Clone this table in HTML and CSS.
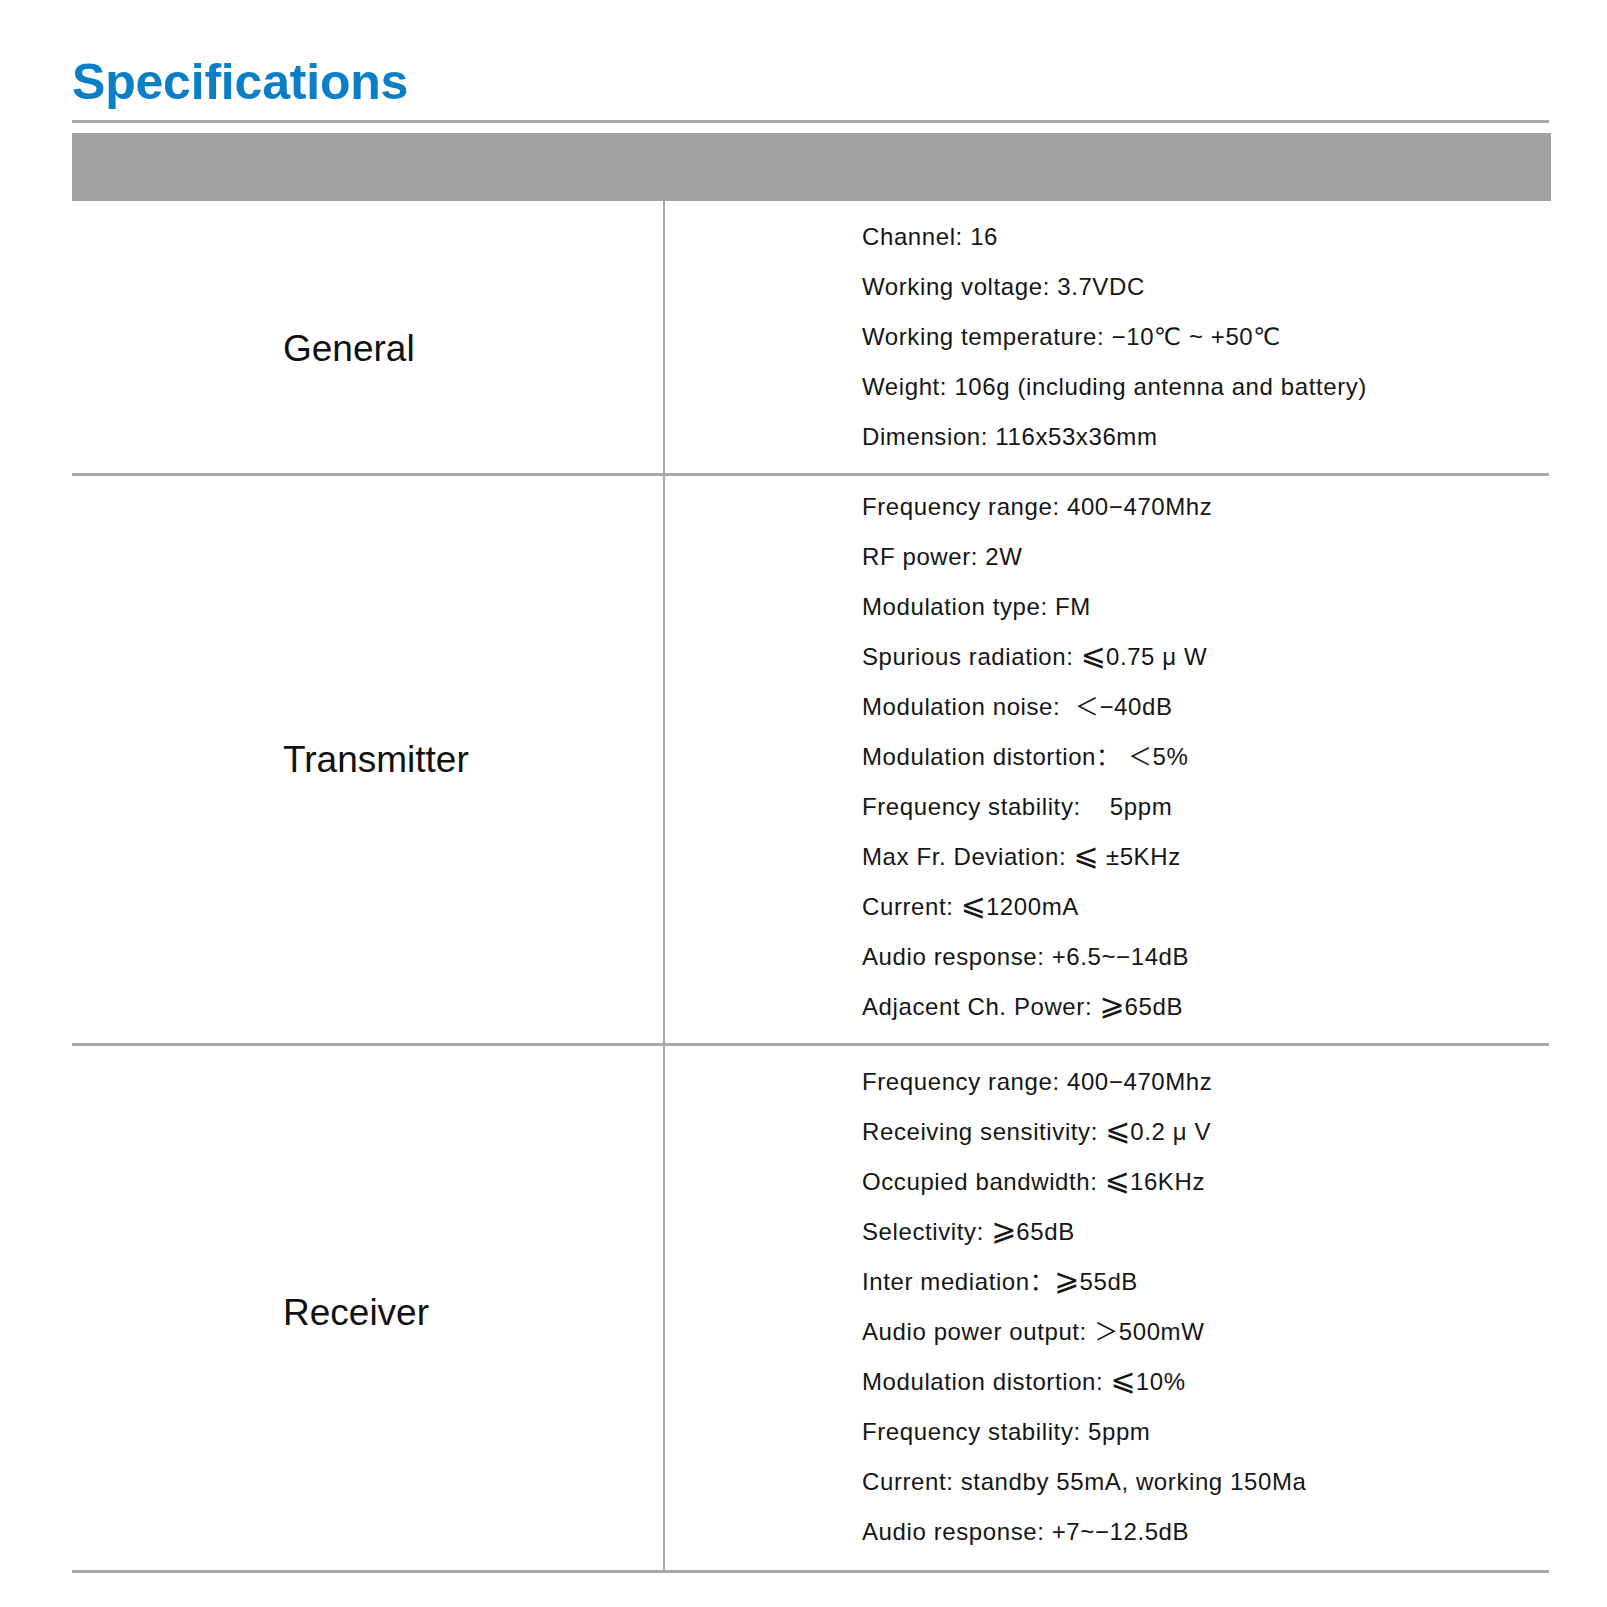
FILE: index.html
```html
<!DOCTYPE html>
<html lang="en">
<head>
<meta charset="utf-8">
<title>Specifications</title>
<link rel="stylesheet" href="styles.css">
</head>
<body>
<main class="page">
  <h1 class="title">Specifications</h1>
  <div class="title-rule"></div>
  <div class="head-bar"></div>
  <section class="spec-table">
    <div class="spec-row spec-row--general">
      <div class="spec-label"><span>General</span></div>
      <ul class="spec-list">
        <li>Channel: 16</li>
        <li>Working voltage: 3.7VDC</li>
        <li>Working temperature: −10℃ ~ +50℃</li>
        <li>Weight: 106g (including antenna and battery)</li>
        <li>Dimension: 116x53x36mm</li>
      </ul>
    </div>
    <div class="spec-row spec-row--tx">
      <div class="spec-label"><span>Transmitter</span></div>
      <ul class="spec-list">
        <li>Frequency range: 400−470Mhz</li>
        <li>RF power: 2W</li>
        <li>Modulation type: FM</li>
        <li>Spurious radiation: <span class="sym">⩽</span>0.75 μ W</li>
        <li>Modulation noise:&nbsp; ＜−40dB</li>
        <li>Modulation distortion：&nbsp;＜5%</li>
        <li>Frequency stability:&nbsp;&nbsp;&nbsp; 5ppm</li>
        <li>Max Fr. Deviation: <span class="sym">⩽</span> ±5KHz</li>
        <li>Current: <span class="sym">⩽</span>1200mA</li>
        <li>Audio response: +6.5~−14dB</li>
        <li>Adjacent Ch. Power: <span class="sym">⩾</span>65dB</li>
      </ul>
    </div>
    <div class="spec-row spec-row--rx">
      <div class="spec-label"><span>Receiver</span></div>
      <ul class="spec-list">
        <li>Frequency range: 400−470Mhz</li>
        <li>Receiving sensitivity: <span class="sym">⩽</span>0.2 μ V</li>
        <li>Occupied bandwidth: <span class="sym">⩽</span>16KHz</li>
        <li>Selectivity: <span class="sym">⩾</span>65dB</li>
        <li>Inter mediation：<span class="sym">⩾</span>55dB</li>
        <li>Audio power output: ＞500mW</li>
        <li>Modulation distortion: <span class="sym">⩽</span>10%</li>
        <li>Frequency stability: 5ppm</li>
        <li>Current: standby 55mA, working 150Ma</li>
        <li>Audio response: +7~−12.5dB</li>
      </ul>
    </div>
  </section>
</main>
</body>
</html>
```

FILE: styles.css
```css
html, body {
  margin: 0;
  padding: 0;
  background: #ffffff;
}

body {
  font-family: "Liberation Sans", "DejaVu Sans", "Noto Sans CJK SC", sans-serif;
  color: #161616;
}

.page {
  width: 1479px;
  padding: 52px 0 0 72px;
}

.title {
  margin: 0;
  font-size: 50px;
  line-height: 60px;
  font-weight: 700;
  color: #0a7ec6;
  letter-spacing: -0.2px;
}

.title-rule {
  margin-top: 8px;
  width: 1477px;
  height: 3px;
  background: #a9a9a9;
}

.head-bar {
  margin-top: 10px;
  height: 68px;
  background: #a1a1a1;
}

.spec-table {
  width: 1477px;
}

.spec-row {
  display: flex;
  border-bottom: 3px solid #a9a9a9;
}

.spec-label {
  width: 380px;
  flex: none;
  padding-left: 211px;
  border-right: 2px solid #a9a9a9;
  display: flex;
  align-items: center;
  font-size: 37px;
  color: #111;
}

.spec-row--general .spec-label {
  padding-top: 24px;
}

.spec-row--rx .spec-label {
  padding-top: 10px;
}

.spec-list {
  list-style: none;
  margin: 0;
  padding: 11px 0 11px 197px;
  font-size: 24px;
  line-height: 50px;
  letter-spacing: 0.6px;
}

.spec-row--tx .spec-list {
  padding-top: 6px;
}

.spec-row--rx .spec-list {
  padding-bottom: 13px;
}

.sym {
  font-size: 30px;
  line-height: 1;
  letter-spacing: 0;
}
```
